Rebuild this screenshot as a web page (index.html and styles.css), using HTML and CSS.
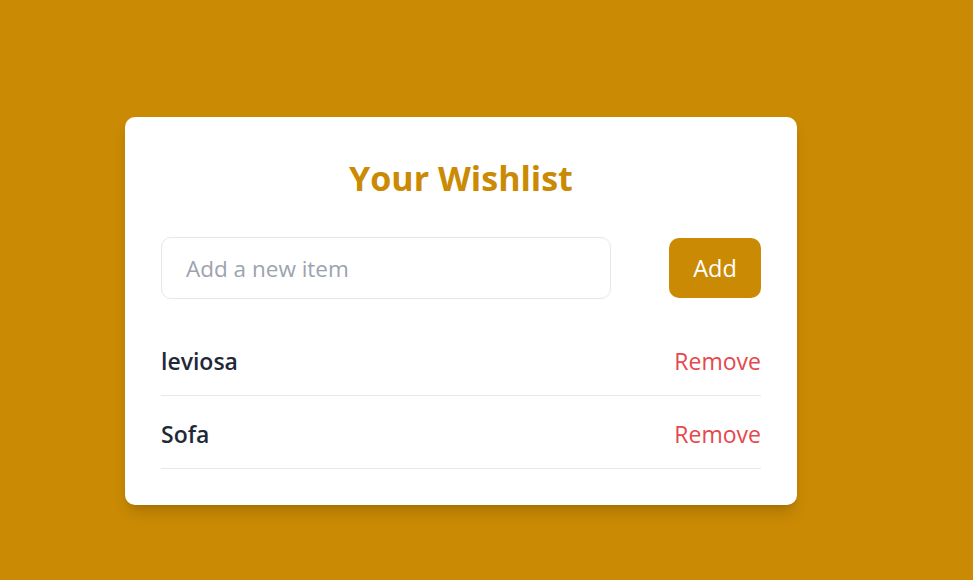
FILE: index.html
```html
<!DOCTYPE html>
<html lang="en">
<head>
<meta charset="utf-8">
<title>Your Wishlist</title>
<link rel="stylesheet" href="styles.css">
</head>
<body>
<main class="page">
  <section class="card">
    <h1 class="title">Your Wishlist</h1>
    <form class="add-form">
      <input class="add-input" type="text" placeholder="Add a new item">
      <button class="add-btn" type="button">Add</button>
    </form>
    <ul class="list">
      <li class="item"><span class="item-name">leviosa</span><button class="remove" type="button">Remove</button></li>
      <li class="item"><span class="item-name">Sofa</span><button class="remove" type="button">Remove</button></li>
    </ul>
  </section>
</main>
</body>
</html>
```
FILE: styles.css
```css
* { box-sizing: border-box; }
html, body { margin: 0; padding: 0; }
body {
  background: #ca8a04;
  font-family: "Open Sans", "Noto Sans", sans-serif;
  height: 580px;
  overflow: hidden;
}
.page {
  display: flex;
  padding-top: 117px;
  padding-left: 125px;
}
.card {
  width: 672px;
  background: #fff;
  border-radius: 10px;
  padding: 36px 36px 36px;
  box-shadow: 0 10px 15px -3px rgba(0,0,0,0.15), 0 4px 6px -4px rgba(0,0,0,0.12);
}
.title {
  margin: 0 0 34px;
  text-align: center;
  color: #ca8a04;
  font-size: 34px;
  line-height: 50px;
  font-weight: 700;
}
.add-form {
  display: flex;
  align-items: center;
  gap: 58px;
  margin: 0 0 24px;
}
.add-input {
  flex: 1;
  height: 62px;
  border: 1px solid #e5e7eb;
  border-radius: 10px;
  padding: 0 24px;
  font-family: inherit;
  font-size: 22.5px;
  color: #1f2937;
  outline: none;
}
.add-input::placeholder { color: #9ca3af; }
.add-btn {
  width: 92px;
  height: 60px;
  border: 0;
  border-radius: 10px;
  background: #ca8a04;
  color: #fff;
  font-family: inherit;
  font-size: 23.5px;
  padding: 0;
}
.list {
  list-style: none;
  margin: 0;
  padding: 0;
}
.item {
  display: flex;
  justify-content: space-between;
  align-items: center;
  height: 73px;
  padding-top: 4px;
  border-bottom: 1px solid #e5e7eb;
}
.item-name {
  font-size: 23px;
  font-weight: 600;
  color: #1f2937;
}
.remove {
  background: none;
  border: 0;
  padding: 0;
  font-family: inherit;
  font-size: 23px;
  color: #e5484d;
}
```
